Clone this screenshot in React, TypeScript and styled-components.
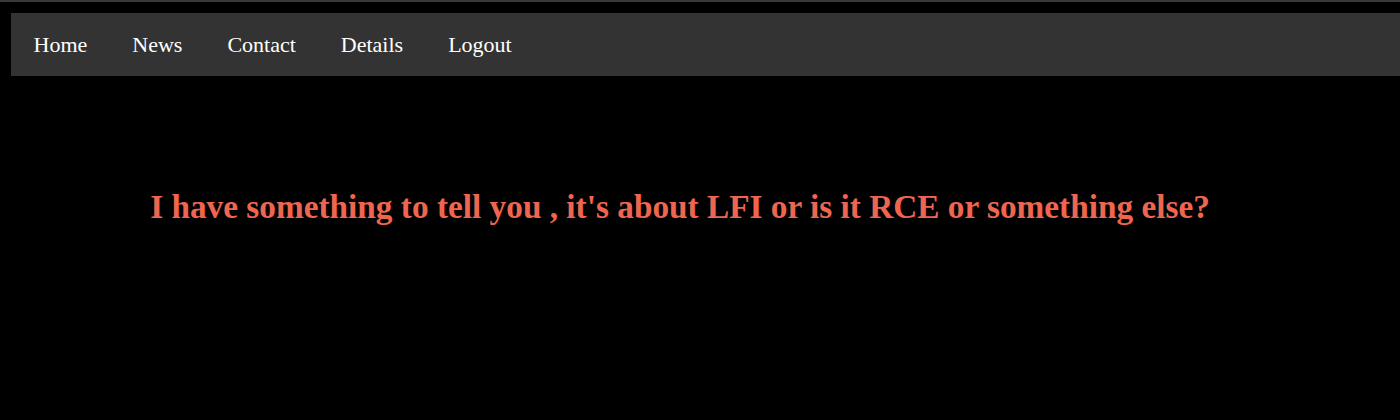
import React from "react";
import styled, { createGlobalStyle } from "styled-components";

const Global = createGlobalStyle`
  html, body { margin: 0; padding: 0; background: #000; }
  body { font-family: "Liberation Serif", "Times New Roman", serif; }
`;

const Page = styled.div`
  width: 1400px;
  height: 420px;
  background: #000;
  border-top: 2px solid #3a3a3a;
  box-sizing: border-box;
  padding-top: 11px;
  padding-left: 11px;
  overflow: hidden;
`;

const NavBar = styled.nav`
  display: flex;
  align-items: center;
  height: 63px;
  background: #333333;
  border-top: 1px dotted #4a2a2a;
  border-bottom: 1px dotted #4a2a2a;
  box-sizing: border-box;
`;

const NavLink = styled.a`
  color: #ffffff;
  font-size: 22px;
  padding: 0 22.5px;
  text-decoration: none;
  line-height: 1;
  padding-top: 1px;
`;

const Main = styled.main`
  display: flex;
  justify-content: center;
  padding-top: 111px;
  padding-right: 51px;
`;

const Heading = styled.h1`
  margin: 0;
  color: #ee6650;
  font-size: 33.3px;
  font-weight: bold;
  line-height: 40px;
`;

export default function App() {
  return (
    <>
      <Global />
      <Page>
        <NavBar>
          <NavLink href="#">Home</NavLink>
          <NavLink href="#">News</NavLink>
          <NavLink href="#">Contact</NavLink>
          <NavLink href="#">Details</NavLink>
          <NavLink href="#">Logout</NavLink>
        </NavBar>
        <Main>
          <Heading>
            I have something to tell you , it's about LFI or is it RCE or something else?
          </Heading>
        </Main>
      </Page>
    </>
  );
}
